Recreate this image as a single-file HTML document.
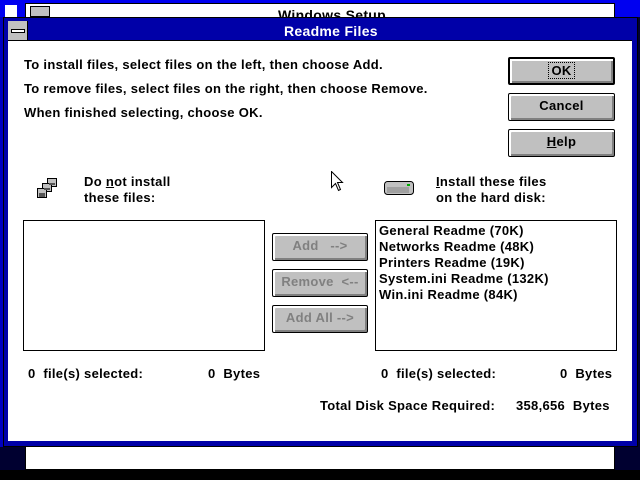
<!DOCTYPE html>
<html><head><style>
*{margin:0;padding:0;box-sizing:border-box}
body{width:640px;height:480px;position:relative;overflow:hidden;background:#000030;font-family:"Liberation Sans",sans-serif;font-weight:bold;font-size:13px;color:#000;letter-spacing:0.3px}
.a{position:absolute}
.t{position:absolute;white-space:nowrap;line-height:14px}
.btn{position:absolute;background:#c0c0c0;border:1px solid #000;border-radius:2px;box-shadow:inset 1px 1px 0 #fff,inset 2px 2px 0 #fff,inset -1px -1px 0 #808080,inset -2px -2px 0 #808080;text-align:center;line-height:24px}
.dis{color:#808080}
.lb{position:absolute;background:#fff;border:1px solid #000}
</style></head><body>
<div class="a" style="left:0;top:0;width:640px;height:17px;background:#0000f0"></div>
<div class="a" style="left:0;top:17px;width:3px;height:430px;background:#0000c0"></div>
<div class="a" style="left:5px;top:5px;width:12px;height:12px;background:#fff"></div>
<div class="a" style="left:25px;top:3px;width:590px;height:467px;background:#fff;border:1px solid #000"></div>
<div class="a" style="left:30px;top:6px;width:20px;height:11px;background:#c0c0c0;border:1px solid #000"></div>
<div class="t" style="left:278px;top:8px;font-size:14px">Windows Setup</div>
<div class="a" style="left:0;top:470px;width:640px;height:10px;background:#000"></div>
<div class="a" style="left:3px;top:17px;width:635px;height:430px;background:#0000a8;border:1px solid #000"></div>
<div class="a" style="left:8px;top:21px;width:624px;height:420px;background:#fff;border-top:1px solid #000"></div>
<div class="a" style="left:8px;top:21px;width:624px;height:20px;background:#0000a8;border-bottom:1px solid #000"></div>
<div class="a" style="left:8px;top:21px;width:20px;height:19px;background:#c0c0c0;border-right:1px solid #000"></div>
<div class="a" style="left:11px;top:29px;width:14px;height:4px;background:#fff;border:1px solid #000"></div>
<div class="t" style="left:284px;top:24px;color:#fff;font-size:14px">Readme Files</div>
<div class="t" style="left:24px;top:58px">To install files, select files on the left, then choose Add.</div>
<div class="t" style="left:24px;top:82px">To remove files, select files on the right, then choose Remove.</div>
<div class="t" style="left:24px;top:106px">When finished selecting, choose OK.</div>
<div class="btn" style="left:508px;top:57px;width:107px;height:28px;border-width:2px;line-height:24px"><span style="outline:1px dotted #000;padding:0 2px">OK</span></div>
<div class="btn" style="left:508px;top:93px;width:107px;height:28px">Cancel</div>
<div class="btn" style="left:508px;top:129px;width:107px;height:28px"><u>H</u>elp</div>
<svg class="a" style="left:37px;top:177px" width="22" height="22" viewBox="0 0 22 22"><g stroke="#000" fill="#c0c0c0"><rect x="10.5" y="1.5" width="9" height="8"/><rect x="5.5" y="6.5" width="9" height="8"/><rect x="0.5" y="11.5" width="9" height="9"/></g><g fill="#555"><rect x="2" y="16" width="6" height="4"/><rect x="7" y="11" width="6" height="2"/><rect x="12" y="6" width="6" height="2"/></g></svg>
<div class="t" style="left:84px;top:175px">Do <u>n</u>ot install</div>
<div class="t" style="left:84px;top:191px">these files:</div>
<svg class="a" style="left:384px;top:179px" width="31" height="17" viewBox="0 0 31 17"><rect x="0.5" y="2.5" width="29" height="13" rx="3" fill="#c0c0c0" stroke="#000"/><path d="M3 9h22M3 11h22M3 13h22" stroke="#808080"/><rect x="23" y="5" width="3" height="2" fill="#0a0"/></svg>
<div class="t" style="left:436px;top:175px"><u>I</u>nstall these files</div>
<div class="t" style="left:436px;top:191px">on the hard disk:</div>
<svg class="a" style="left:331px;top:171px" width="13" height="21" viewBox="0 0 13 21"><path d="M0.5 0.5V16.5L4.5 12.5L7.5 19.5L9.5 18.5L6.5 11.5H11.5Z" fill="#fff" stroke="#000"/></svg>
<div class="lb" style="left:23px;top:220px;width:242px;height:131px"></div>
<div class="lb" style="left:375px;top:220px;width:242px;height:131px;padding:2px 3px;line-height:16px">General Readme (70K)<br>Networks Readme (48K)<br>Printers Readme (19K)<br>System.ini Readme (132K)<br>Win.ini Readme (84K)</div>
<div class="btn dis" style="left:272px;top:233px;width:96px;height:28px">Add &nbsp;&nbsp;--&gt;</div>
<div class="btn dis" style="left:272px;top:269px;width:96px;height:28px">Remove &nbsp;&lt;--</div>
<div class="btn dis" style="left:272px;top:305px;width:96px;height:28px">Add All --&gt;</div>
<div class="t" style="left:28px;top:367px">0 &nbsp;file(s) selected:</div>
<div class="t" style="left:208px;top:367px">0 &nbsp;Bytes</div>
<div class="t" style="left:381px;top:367px">0 &nbsp;file(s) selected:</div>
<div class="t" style="left:560px;top:367px">0 &nbsp;Bytes</div>
<div class="t" style="left:320px;top:399px">Total Disk Space Required:</div>
<div class="t" style="left:516px;top:399px">358,656 &nbsp;Bytes</div>
</body></html>
